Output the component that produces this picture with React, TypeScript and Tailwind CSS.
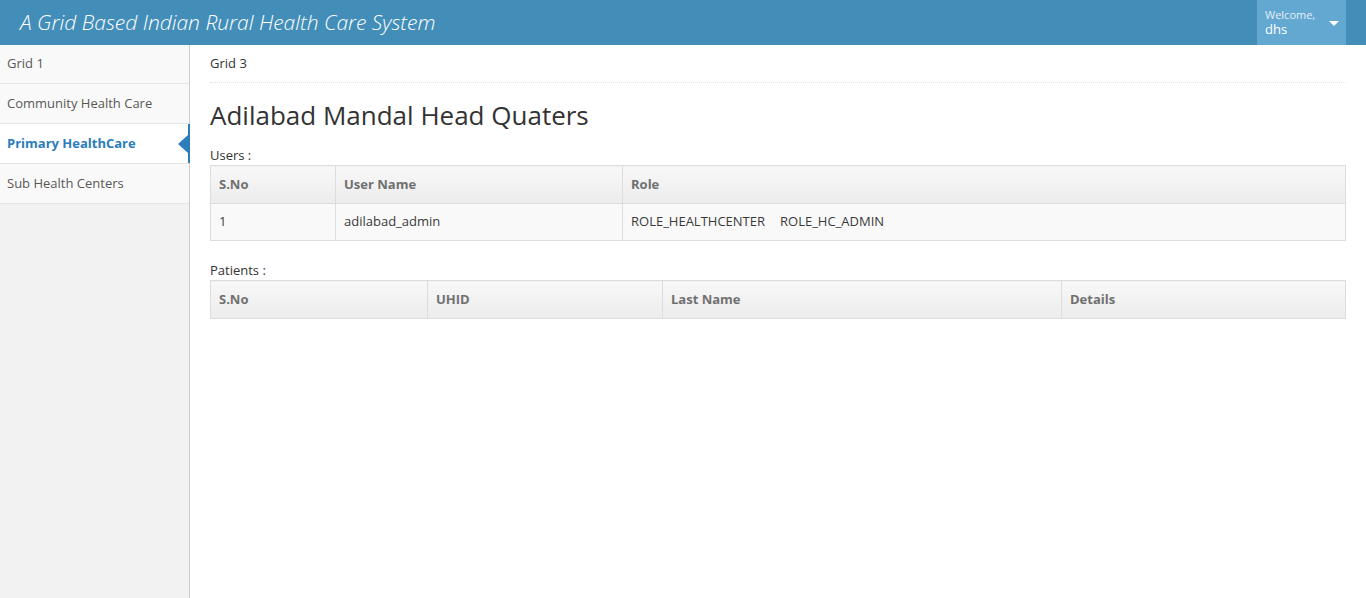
import { ReactNode } from "react";

const navItems = ["Grid 1", "Community Health Care", "Primary HealthCare", "Sub Health Centers"];

function Th({ children, className = "" }: { children: ReactNode; className?: string }) {
  return (
    <th
      className={`h-[38px] border border-[#dddddd] bg-gradient-to-b from-[#f8f8f8] to-[#ececec] px-2 text-left font-bold text-[#707070] ${className}`}
    >
      {children}
    </th>
  );
}

function Td({ children, className = "" }: { children: ReactNode; className?: string }) {
  return <td className={`h-[37px] border border-[#dddddd] px-2 text-[#393939] ${className}`}>{children}</td>;
}

export default function App() {
  return (
    <div
      className="flex h-[598px] flex-col overflow-hidden bg-white text-[13px] text-[#393939]"
      style={{ fontFamily: '"Open Sans", Arial, sans-serif' }}
    >
      <header className="flex h-[45px] shrink-0 items-stretch justify-between bg-[#438eb9] pr-5">
        <div className="flex items-center pl-5 text-[21px] font-light italic text-white">
          A Grid Based Indian Rural Health Care System
        </div>
        <div className="flex w-[89px] items-center bg-[#62a8d1] pl-2 text-white">
          <div className="flex flex-col leading-none">
            <span className="text-[11px] text-[#e4eff6]">Welcome,</span>
            <span className="mt-[3px] text-[13px]">dhs</span>
          </div>
          <span className="ml-[14px] mt-[2px] h-0 w-0 border-x-[5px] border-t-[5px] border-x-transparent border-t-white" />
        </div>
      </header>

      <div className="flex min-h-0 flex-1">
        <aside className="w-[190px] shrink-0 border-r border-[#cccccc] bg-[#f2f2f2]">
          {navItems.map((item, i) => {
            const active = item === "Primary HealthCare";
            return (
              <div
                key={item}
                className={`relative flex items-center border-b border-[#e5e5e5] pl-[7px] ${
                  i === 0 ? "h-[39px]" : "h-[40px]"
                } ${active ? "bg-white font-bold text-[#2b7dbc]" : "bg-[#f9f9f9] text-[#585858]"}`}
              >
                {item}
                {active && (
                  <>
                    <span className="absolute -right-px top-0 h-full w-[2px] bg-[#2b7dbc]" />
                    <span className="absolute right-px top-1/2 h-0 w-0 -translate-y-1/2 border-y-[9px] border-r-[10px] border-y-transparent border-r-[#2b7dbc]" />
                  </>
                )}
              </div>
            );
          })}
        </aside>

        <main className="min-w-0 flex-1 px-5">
          <div className="flex h-[38px] items-center border-b border-dotted border-[#e2e2e2] text-[#333333]">
            Grid 3
          </div>
          <h1 className="mt-[15px] text-[26px] leading-[34px] text-[#333333]">Adilabad Mandal Head Quaters</h1>

          <div className="mt-[14px] leading-[18px] text-[#333333]">Users :</div>
          <table className="mt-[1px] w-full border-collapse">
            <thead>
              <tr>
                <Th className="w-[125px]">S.No</Th>
                <Th className="w-[287px]">User Name</Th>
                <Th>Role</Th>
              </tr>
            </thead>
            <tbody>
              <tr className="bg-[#f9f9f9]">
                <Td>1</Td>
                <Td>adilabad_admin</Td>
                <Td>
                  ROLE_HEALTHCENTER<span className="inline-block w-[15px]" />ROLE_HC_ADMIN
                </Td>
              </tr>
            </tbody>
          </table>

          <div className="mt-[20px] leading-[18px] text-[#333333]">Patients :</div>
          <table className="mt-[1px] w-full border-collapse">
            <thead>
              <tr>
                <Th className="w-[217px]">S.No</Th>
                <Th className="w-[235px]">UHID</Th>
                <Th className="w-[399px]">Last Name</Th>
                <Th>Details</Th>
              </tr>
            </thead>
          </table>
        </main>
      </div>
    </div>
  );
}
